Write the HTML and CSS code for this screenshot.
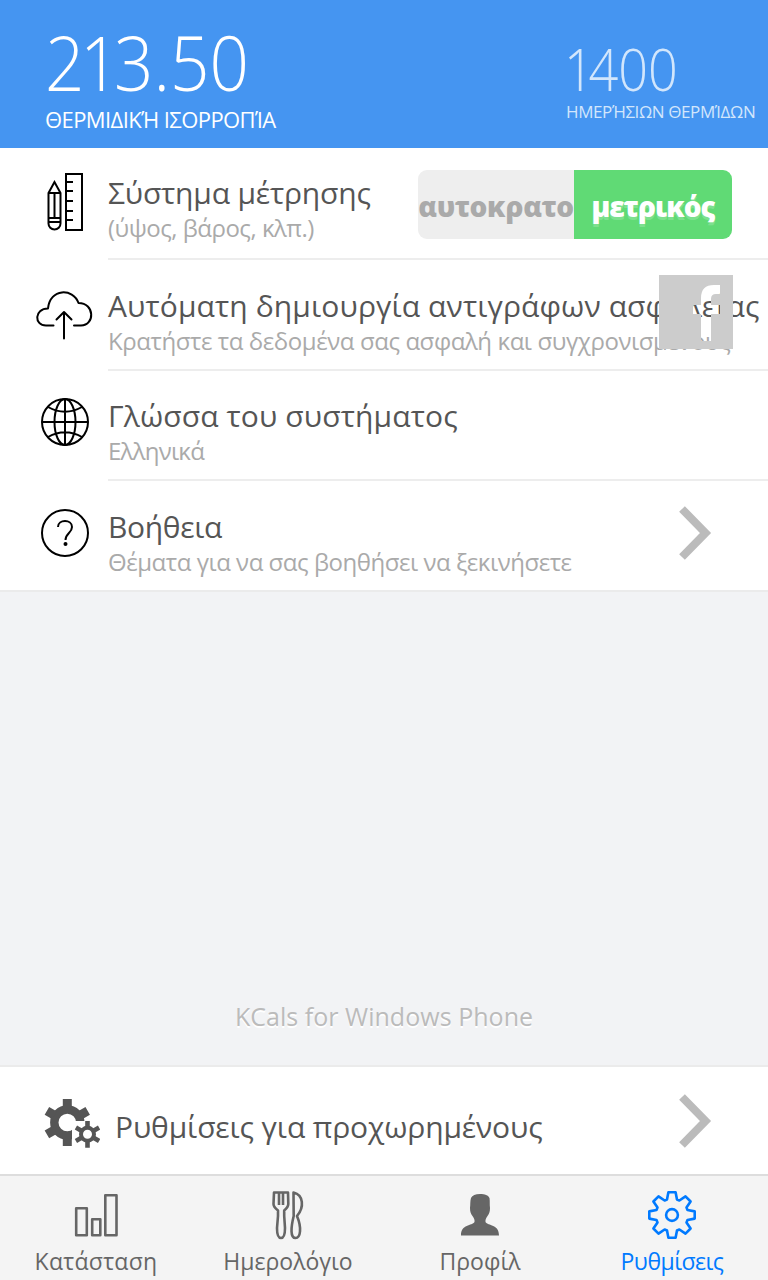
FILE: index.html
```html
<!DOCTYPE html>
<html lang="el">
<head>
<meta charset="utf-8">
<title>KCals</title>
<link rel="stylesheet" href="styles.css">
</head>
<body>
<header class="header">
  <div class="balance">
    <div class="balance-num">2<span class="one">1</span>3.50</div>
    <div class="balance-label">ΘΕΡΜΙΔΙΚΉ ΙΣΟΡΡΟΠΊΑ</div>
  </div>
  <div class="daily">
    <div class="daily-num"><span class="one">1</span>400</div>
    <div class="daily-label">ΗΜΕΡΉΣΙΩΝ ΘΕΡΜΊΔΩΝ</div>
  </div>
</header>
<main class="list">
  <section class="row row-units">
    <svg class="icon" viewBox="0 0 108 110" fill="none" stroke="#000" stroke-width="2">
      <path d="M66 26H82V82H66ZM66 34H73M66 43H73M66 53H73M66 63H73M66 72H73"/>
      <path d="M54.500 34L48.500 45V75.500A6 6 0 0 0 60.500 75.500V45ZM48.500 45H60.500M54.500 45V70M48.500 70H60.500M48.500 74H60.500"/>
    </svg>
    <div class="body">
      <div class="title title-units">Σύστημα μέτρησης</div>
      <div class="sub sub-units">(ύψος, βάρος, κλπ.)</div>
    </div>
    <div class="toggle">
      <div class="opt opt-off">αυτοκρατο</div>
      <div class="opt opt-on">μετρικός</div>
    </div>
  </section>
  <section class="row row-backup">
    <svg class="icon" viewBox="0 0 108 110" fill="none" stroke="#000" stroke-width="2" stroke-linecap="round" stroke-linejoin="round">
      <path d="M53.500 65.500H46C34 65.500 34 48.500 48 48.500C50 28 73 28 78.500 43C95 43 95 65.500 81 65.500H74"/>
      <path d="M64 78.500V52M56.500 59.500L64 52L71.500 59.500"/>
    </svg>
    <div class="body">
      <div class="title title-backup">Αυτόματη δημιουργία αντιγράφων ασφαλείας</div>
      <div class="sub sub-backup">Κρατήστε τα δεδομένα σας ασφαλή και συγχρονισμένους</div>
    </div>
    <svg class="facebook" viewBox="0 0 74 74"><path fill="#ccc" fill-rule="evenodd" d="M0 0H74V74H0ZM42 66H52V39H61V30H52V24Q52 19 57 19H61V10H55Q42 10 42 23V30H34V39H42Z"/></svg>
  </section>
  <section class="row row-lang">
    <svg class="icon" viewBox="0 0 108 110" fill="none" stroke="#000" stroke-width="2">
      <circle cx="65" cy="51" r="23"/><ellipse cx="65" cy="51" rx="10.500" ry="23"/><path d="M65 28V74M42 51H88M48 36Q65 45.500 82 36M48 66Q65 56.500 82 66"/>
    </svg>
    <div class="body">
      <div class="title title-lang">Γλώσσα του συστήματος</div>
      <div class="sub sub-lang">Ελληνικά</div>
    </div>
  </section>
  <section class="row row-help">
    <svg class="icon" viewBox="0 0 108 110" fill="none" stroke="#000" stroke-width="2">
      <circle cx="65" cy="52" r="23"/><path d="M58 46C58 38 72 38 72 46C72 52 65.500 52 65.500 59"/><circle cx="65.500" cy="63" r="2" fill="#000" stroke="none"/>
    </svg>
    <div class="body">
      <div class="title title-help">Βοήθεια</div>
      <div class="sub sub-help">Θέματα για να σας βοηθήσει να ξεκινήσετε</div>
    </div>
    <svg class="chevron" viewBox="0 0 40 60"><path d="M6 6L29.500 30L6 54"/></svg>
  </section>
</main>
<div class="space"><div class="brand">KCals for Windows Phone</div></div>
<section class="advanced">
  <svg class="gears" viewBox="0 0 60 54">
    <defs>
      <clipPath id="big"><path d="M0 0H60V26H32V54H0Z"/></clipPath>
    </defs>
    <g clip-path="url(#big)" stroke="#555" fill="none">
      <circle cx="27.300" cy="27.500" r="13" stroke-width="8.400"/>
      <path stroke-width="9" d="M27.300 13V4M27.300 42V51M14.700 20.300L6.900 15.800M39.900 34.800L47.700 39.300M14.700 34.800L6.900 39.300M39.900 20.300L47.700 15.800"/>
    </g>
    <g stroke="#555" fill="none">
      <circle cx="47.500" cy="39.300" r="6.500" stroke-width="4"/>
      <path stroke-width="4.600" d="M47.500 32.300V26M47.500 46.300V52.700M41.400 35.800L35.900 32.600M53.600 42.800L59.100 46M41.400 42.800L35.900 46M53.600 35.800L59.100 32.600"/>
    </g>
  </svg>
  <div class="adv-title">Ρυθμίσεις για προχωρημένους</div>
  <svg class="chevron" viewBox="0 0 40 60"><path d="M6 6L29.500 30L6 54"/></svg>
</section>
<nav class="tabs">
  <div class="tab">
    <svg class="tab-icon" viewBox="0 0 56 56"><path d="M8.200 20.300H18.800V47.200H8.200ZM24.200 31.200H32.300V47.200H24.200ZM37.300 7.300H48.500V47.200H37.300Z"/></svg>
    <div class="tab-label label-status">Κατάσταση</div>
  </div>
  <div class="tab">
    <svg class="tab-icon" viewBox="0 0 56 56"><path d="M14 4.500H28L28.300 16Q28.300 19 24.200 22.500V28L25 40Q25 50 21 50Q17 50 17 40L18 28V22.500Q13.500 19 13.500 16ZM19 4.500V17M23 4.500V17M33.500 4.500C43.500 7 44.500 19 37 28C42 40 40.500 50 35.500 50C30 50 31 39 33.700 28Z"/></svg>
    <div class="tab-label label-diary">Ημερολόγιο</div>
  </div>
  <div class="tab">
    <svg class="tab-icon" viewBox="0 0 56 56"><path class="solid" d="M28 6C33 6 36 7 37.500 10C38 13 37.500 17 38 20C38 24 37 26 35.500 28Q34 30 33.500 32V34C36 38 47 36 47 47.500H9C9 36 20 38 22.500 34V32Q22 30 20.500 28C19 26 18 24 18 20C18.500 17 18 13 19 10Q21 6 28 6Z"/></svg>
    <div class="tab-label label-profile">Προφίλ</div>
  </div>
  <div class="tab active">
    <svg class="tab-icon" viewBox="0 0 56 56"><path d="M23 11.500L24.400 4.300H31.600L33 11.500L35.400 12.500L41.500 8.400L46.600 13.500L42.500 19.600L43.500 22L50.700 23.400V30.600L43.500 32L42.500 34.400L46.600 40.500L41.500 45.600L35.400 41.500L33 42.500L31.600 49.700H24.400L23 42.500L20.600 41.500L14.500 45.600L9.400 40.500L13.500 34.400L12.500 32L5.300 30.600V23.400L12.500 22L13.500 19.600L9.400 13.500L14.500 8.400L20.600 12.500Z"/><circle cx="28" cy="27" r="5.900"/></svg>
    <div class="tab-label label-settings">Ρυθμίσεις</div>
  </div>
</nav>
</body>
</html>
```
FILE: styles.css
```css
* { box-sizing: border-box; }
body {
  margin: 0; width: 768px; height: 1280px; overflow: hidden;
  display: flex; flex-direction: column;
  font-family: "Open Sans", "Noto Sans", sans-serif;
  background: #f2f3f5; white-space: nowrap;
}

.header { height: 148px; flex: none; display: flex; background: #4595f1; color: #fff; }
.balance { width: 566px; padding: 24px 0 0 45px; }
.balance-num { font-size: 76px; line-height: 76px; font-weight: 300; transform: scaleX(.91); transform-origin: left; margin-left: 0; }
.balance-num .one { letter-spacing: -6px; margin-left: -5px; }
.balance-label { font-size: 22px; line-height: 30px; margin-top: 4px; letter-spacing: -.58px; }
.daily { padding-top: 40px; color: #d2e6fc; }
.daily-num { font-size: 58px; line-height: 58px; font-weight: 300; transform: scaleX(.9); transform-origin: left; margin-left: -2px; }
.daily-num .one { letter-spacing: -6px; }
.daily-label { font-size: 17px; line-height: 24px; margin-top: 2px; letter-spacing: -.4px; }

.list { flex: none; background: #fff; }
.row { display: flex; position: relative; height: 111px; }
.row-units { height: 112px; }
.row-lang { height: 110px; }
.icon { width: 108px; height: 110px; flex: none; }
.body { flex: 1; min-width: 0; padding-top: 28px; border-bottom: 2px solid #ededed; }
.row-units .body { padding-top: 27px; }
.row-lang .body { padding-top: 27px; }
.row-help { border-bottom: 2px solid #ebebeb; }
.row-help .body { border-bottom: 0; }
.title { font-size: 30px; line-height: 36px; color: #555; }
.sub { font-size: 24px; line-height: 33px; color: #aaa; }
.title-units { letter-spacing: -.18px; }
.title-backup { letter-spacing: .11px; }
.title-lang { letter-spacing: .12px; }
.title-help { letter-spacing: -.35px; }
.sub-units { letter-spacing: -.5px; }
.sub-backup { letter-spacing: -.42px; }
.sub-lang { letter-spacing: -.76px; }
.sub-help { letter-spacing: -.46px; }

.toggle {
  display: flex; width: 350px; height: 112px; padding: 22px 36px 21px 0;
  border-bottom: 2px solid #ededed;
}
.opt { flex: none; height: 69px; line-height: 73px; font-size: 28px; font-weight: 800; text-align: center; overflow: hidden; }
.opt-off { width: 156px; background: #eee; color: #aaa; border-radius: 9px 0 0 9px; letter-spacing: -.3px; }
.opt-on { width: 158px; background: #60da75; color: #fff; border-radius: 0 9px 9px 0; letter-spacing: -.95px; text-shadow: 0 3px 0 rgba(255, 255, 255, .2); }
.facebook { position: absolute; top: 15px; right: 35px; width: 74px; height: 74px; }
.chevron { width: 40px; height: 60px; flex: none; margin: 22px 52px 0 0; }
.chevron path { fill: none; stroke: #bbb; stroke-width: 8; }

.space { flex: 1; display: flex; align-items: flex-end; justify-content: center; padding-bottom: 33px; }
.brand { font-size: 25px; line-height: 32px; color: #bbb; letter-spacing: .03px; text-shadow: 0 2px 0 #fff; }

.advanced { height: 109px; flex: none; display: flex; background: #fff; border-top: 2px solid #ebebeb; padding-left: 40px; }
.gears { width: 60px; height: 54px; margin: 28px 15px 0 0; }
.adv-title { flex: 1; padding-top: 42px; font-size: 30px; line-height: 36px; color: #555; letter-spacing: -.13px; }
.advanced .chevron { margin-top: 24px; }

.tabs { height: 106px; flex: none; display: flex; background: #f4f4f4; border-top: 2px solid #ddd; color: #666; }
.tab { flex: 1; display: flex; flex-direction: column; align-items: center; padding-top: 12px; }
.tab-icon { width: 56px; height: 56px; fill: none; stroke: #666; stroke-width: 2.600; stroke-linejoin: round; }
.tab-icon .solid { fill: #666; stroke: none; }
.tab-label { margin-top: 2px; font-size: 23px; line-height: 30px; }
.label-status { letter-spacing: .3px; }
.label-profile { letter-spacing: 0; }
.label-settings { letter-spacing: -.5px; }
.active { color: #007aff; }
.active .tab-icon { stroke: #007aff; }
```
